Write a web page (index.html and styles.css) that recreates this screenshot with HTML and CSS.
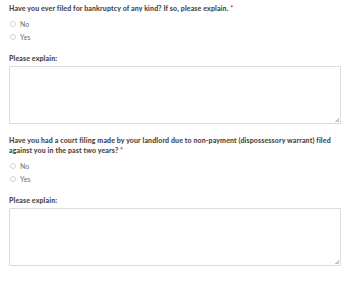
FILE: index.html
```html
<!DOCTYPE html>
<html>
<head>
<meta charset="utf-8">
<link rel="stylesheet" href="styles.css">
</head>
<body>
<div class="form">
  <div class="field">
    <div class="question">Have you ever filed for bankruptcy of any kind? If so, please explain. <span class="req">*</span></div>
    <div class="options">
      <label class="option"><span class="radio"></span>No</label>
      <label class="option"><span class="radio"></span>Yes</label>
    </div>
    <div class="explain-label">Please explain:</div>
    <div class="box"><textarea class="explain"></textarea></div>
  </div>
  <div class="field">
    <div class="question">Have you had a court filing made by your landlord due to non-payment (dispossessory warrant) filed against you in the past two years? <span class="req">*</span></div>
    <div class="options">
      <label class="option"><span class="radio"></span>No</label>
      <label class="option"><span class="radio"></span>Yes</label>
    </div>
    <div class="explain-label">Please explain:</div>
    <div class="box"><textarea class="explain"></textarea></div>
  </div>
</div>
</body>
</html>
```

FILE: styles.css
```css
* { box-sizing: border-box; }
html, body { margin: 0; padding: 0; background: #fff; }
body { font-family: Lato, "Open Sans", sans-serif; color: #333; }
.form {
  display: flex;
  flex-direction: column;
  gap: 11px;
  padding: 3px 19px 0 9px;
}
.field {
  display: flex;
  flex-direction: column;
}
.question {
  font-size: 7px;
  line-height: 10px;
  font-weight: 900;
  letter-spacing: 0.12px;
  color: #474747;
  max-width: 334px;
}
.req { color: #e53935; }
.options {
  display: flex;
  flex-direction: column;
  margin-top: 4px;
}
.option {
  display: flex;
  align-items: center;
  height: 13px;
  font-size: 7px;
  letter-spacing: 0.1px;
  color: #707070;
  padding-left: 1px;
}
.radio {
  width: 6px;
  height: 6px;
  border: 1px solid #d6d6d6;
  border-radius: 50%;
  margin-right: 4px;
  background: #fff;
}
.explain-label {
  margin-top: 10px;
  font-size: 7px;
  line-height: 10px;
  font-weight: 900;
  letter-spacing: 0.12px;
  color: #474747;
}
.box {
  position: relative;
  margin-top: 3px;
}
.box::after {
  content: "";
  position: absolute;
  right: 2px;
  bottom: 2px;
  width: 4px;
  height: 4px;
  background: linear-gradient(135deg, transparent 50%, #c8c8c8 50%);
  pointer-events: none;
}
.explain {
  margin: 0;
  width: 100%;
  height: 58px;
  border: 1px solid #dcdcdc;
  border-radius: 1px;
  resize: none;
  background: #fff;
  display: block;
}
```
